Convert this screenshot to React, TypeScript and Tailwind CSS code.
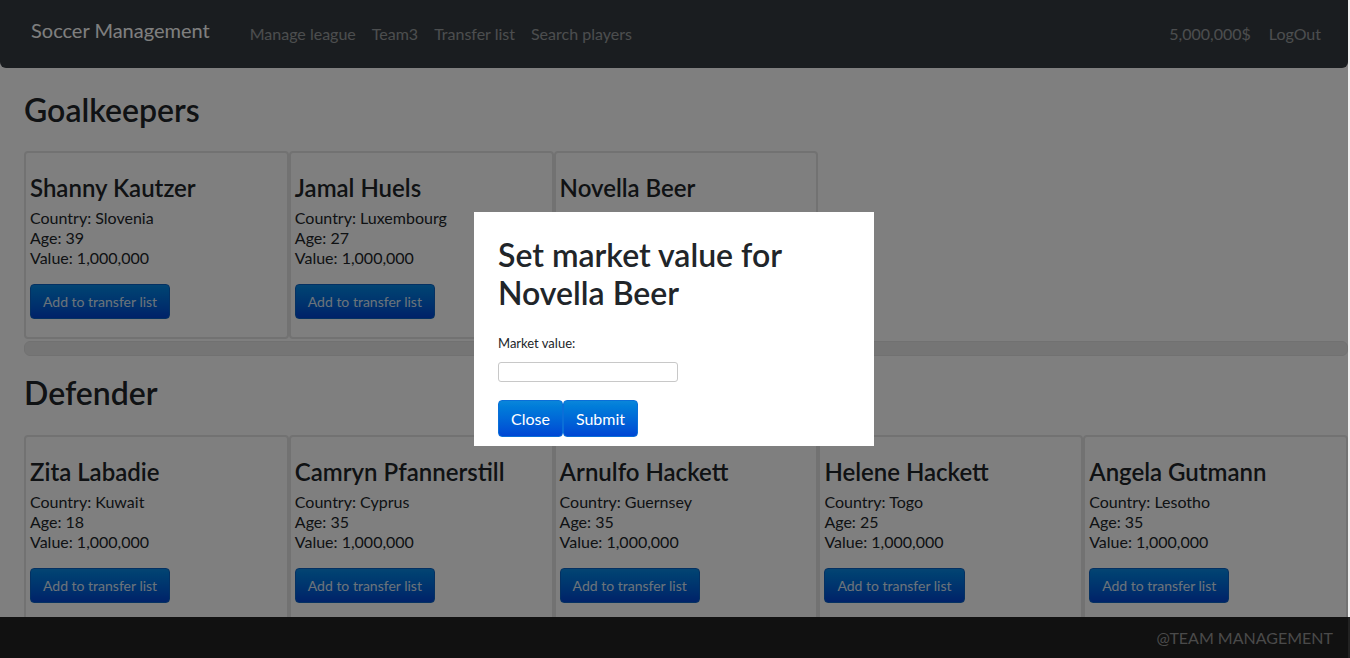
import React, { useState } from "react";

type Player = {
  name: string;
  country: string;
  age: number;
  value: string;
};

const goalkeepers: Player[] = [
  { name: "Shanny Kautzer", country: "Slovenia", age: 39, value: "1,000,000" },
  { name: "Jamal Huels", country: "Luxembourg", age: 27, value: "1,000,000" },
  { name: "Novella Beer", country: "Italy", age: 30, value: "1,000,000" },
];

const defenders: Player[] = [
  { name: "Zita Labadie", country: "Kuwait", age: 18, value: "1,000,000" },
  { name: "Camryn Pfannerstill", country: "Cyprus", age: 35, value: "1,000,000" },
  { name: "Arnulfo Hackett", country: "Guernsey", age: 35, value: "1,000,000" },
  { name: "Helene Hackett", country: "Togo", age: 25, value: "1,000,000" },
  { name: "Angela Gutmann", country: "Lesotho", age: 35, value: "1,000,000" },
];

const PlayerCard = ({ player }: { player: Player }) => (
  <div className="w-1/5 shrink-0 border-2 border-[#e4e4e4] rounded-[4px] px-1 pt-[20px] pb-[18px] text-[#212529]">
    <h3 className="text-[24px] leading-[29px] font-semibold mb-[6px]">{player.name}</h3>
    <p className="text-[16px] leading-[20px]">Country: {player.country}</p>
    <p className="text-[16px] leading-[20px]">Age: {player.age}</p>
    <p className="text-[16px] leading-[20px]">Value: {player.value}</p>
    <button className="mt-[16px] h-[35px] px-3 text-[14px] text-[#d8e6f5] rounded-[4px] border border-[#0a63c4] bg-gradient-to-b from-[#0a8ae6] to-[#0044d2]">
      Add to transfer list
    </button>
  </div>
);

const App = () => {
  const [marketValue, setMarketValue] = useState("");

  return (
    <div className="relative min-h-[658px] bg-[#f0f0f0] font-['Lato','Liberation_Sans',sans-serif]">
      <div className="mr-[2px] bg-white min-h-[658px]">
        <nav className="h-[68px] bg-[#343a40] rounded-b-[6px] flex items-center pl-[31px] pr-[27px]">
          <span className="text-[20px] text-white -mt-[9px]">Soccer Management</span>
          <div className="flex gap-4 ml-10 text-[16px] text-white/50">
            <a>Manage league</a>
            <a>Team3</a>
            <a>Transfer list</a>
            <a>Search players</a>
          </div>
          <div className="ml-auto flex gap-[18px] text-[16px] text-white/50">
            <span>5,000,000$</span>
            <a>LogOut</a>
          </div>
        </nav>

        <main className="pl-6 pb-[60px]">
          <h2 className="text-[32px] leading-[38px] font-semibold text-[#212529] mt-[23px] mb-[22px]">Goalkeepers</h2>
          <div className="flex">
            {goalkeepers.map((p) => (
              <PlayerCard key={p.name} player={p} />
            ))}
          </div>
          <div className="h-[15px] mt-[2px] rounded-[6px] bg-[#ebebeb] border border-[#e2e2e2]" />

          <h2 className="text-[32px] leading-[38px] font-semibold text-[#212529] mt-[18px] mb-[23px]">Defender</h2>
          <div className="flex">
            {defenders.map((p) => (
              <PlayerCard key={p.name} player={p} />
            ))}
          </div>
        </main>
      </div>

      <footer className="fixed bottom-0 left-0 right-0 h-[41px] bg-[#222] flex items-center justify-end pr-[17px]">
        <span className="text-[16px] text-[#959595]">@TEAM MANAGEMENT</span>
      </footer>

      {/* modal backdrop */}
      <div className="fixed inset-0 right-[2px] bg-black/50 flex items-center justify-center">
        <div className="w-[400px] bg-white px-6 pt-[24px] pb-[9px]">
          <h2 className="text-[32px] leading-[38px] font-semibold text-[#212529]">
            Set market value for Novella Beer
          </h2>
          <label className="block mt-[22px] text-[13px] text-[#212529]">Market value:</label>
          <input
            className="block mt-[9px] w-[180px] h-[20px] border border-[#c8c8c8] rounded-[3px] px-1 text-[13px] outline-none"
            value={marketValue}
            onChange={(e) => setMarketValue(e.target.value)}
          />
          <div className="flex mt-[18px]">
            <button className="h-[37px] px-3 text-[16px] text-white rounded-[4px] border border-[#0a6fd8] bg-gradient-to-b from-[#0a86da] to-[#0046d4]">
              Close
            </button>
            <button className="h-[37px] px-3 text-[16px] text-white rounded-[4px] border border-[#0a6fd8] bg-gradient-to-b from-[#0a86da] to-[#0046d4]">
              Submit
            </button>
          </div>
        </div>
      </div>
    </div>
  );
};

export default App;
